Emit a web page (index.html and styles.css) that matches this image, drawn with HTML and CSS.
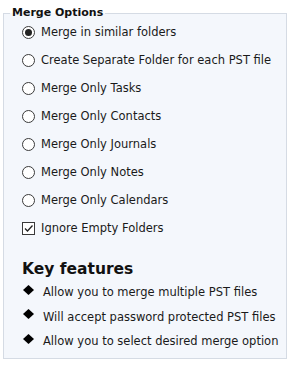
FILE: index.html
```html
<!DOCTYPE html>
<html>
<head>
<meta charset="utf-8">
<link rel="stylesheet" href="styles.css">
</head>
<body>
<fieldset class="panel">
  <legend class="legend">Merge Options</legend>
  <ul class="options">
    <li class="opt"><span class="radio checked"></span><span>Merge in similar folders</span></li>
    <li class="opt"><span class="radio"></span><span>Create Separate Folder for each PST file</span></li>
    <li class="opt"><span class="radio"></span><span>Merge Only Tasks</span></li>
    <li class="opt"><span class="radio"></span><span>Merge Only Contacts</span></li>
    <li class="opt"><span class="radio"></span><span>Merge Only Journals</span></li>
    <li class="opt"><span class="radio"></span><span>Merge Only Notes</span></li>
    <li class="opt"><span class="radio"></span><span>Merge Only Calendars</span></li>
    <li class="opt"><span class="check"><svg width="11" height="11" viewBox="0 0 11 11"><path d="M2 5.5 L4.5 8 L9.5 2.5" fill="none" stroke="#222" stroke-width="1.3"/></svg></span><span>Ignore Empty Folders</span></li>
  </ul>
  <h2 class="heading">Key features</h2>
  <ul class="features">
    <li class="feat"><svg class="diamond" width="11" height="10" viewBox="0 0 11 10"><polygon points="5.5,0 11,5 5.5,10 0,5" fill="#000"/></svg><span>Allow you to merge multiple PST files</span></li>
    <li class="feat"><svg class="diamond" width="11" height="10" viewBox="0 0 11 10"><polygon points="5.5,0 11,5 5.5,10 0,5" fill="#000"/></svg><span>Will accept password protected PST files</span></li>
    <li class="feat"><svg class="diamond" width="11" height="10" viewBox="0 0 11 10"><polygon points="5.5,0 11,5 5.5,10 0,5" fill="#000"/></svg><span>Allow you to select desired merge option</span></li>
  </ul>
</fieldset>
</body>
</html>
```
FILE: styles.css
```css
html, body {
  margin: 0;
  padding: 0;
  background: #ffffff;
}
body {
  font-family: "DejaVu Sans", Verdana, sans-serif;
  font-size: 11.5px;
  color: #1a1a1a;
}
.panel {
  margin: 6px 5px 0 3px;
  padding: 0 0 7px 0;
  border: 1px solid #d5dbe4;
  background: #f4f7fc;
  min-width: 0;
}
.legend {
  margin-left: 6px;
  padding: 0 2px;
  font-weight: bold;
  font-size: 11px;
  line-height: 14px;
  color: #111;
}
.options, .features {
  list-style: none;
  margin: 0;
  padding: 0 0 0 18px;
  display: flex;
  flex-direction: column;
}
.options {
  padding-top: 2px;
  gap: 8px;
}
.opt {
  height: 20px;
  display: flex;
  align-items: center;
  gap: 6px;
}
.radio {
  width: 11px;
  height: 11px;
  border: 1px solid #3a3a3a;
  border-radius: 50%;
  background: #fff;
  display: flex;
  align-items: center;
  justify-content: center;
  flex: none;
}
.radio.checked::after {
  content: "";
  width: 7px;
  height: 7px;
  border-radius: 50%;
  background: #222;
}
.check {
  width: 11px;
  height: 11px;
  border: 1px solid #3a3a3a;
  background: #fff;
  display: flex;
  align-items: center;
  justify-content: center;
  flex: none;
}
.heading {
  margin: 22px 0 4px 0;
  padding-left: 18px;
  font-size: 15.5px;
  line-height: 18px;
  font-weight: bold;
  color: #111;
}
.features {
  gap: 4.5px;
}
.feat {
  height: 20px;
  display: flex;
  align-items: center;
  gap: 9px;
  margin-left: 1px;
}
.diamond {
  flex: none;
  margin-top: -5px;
}
```
